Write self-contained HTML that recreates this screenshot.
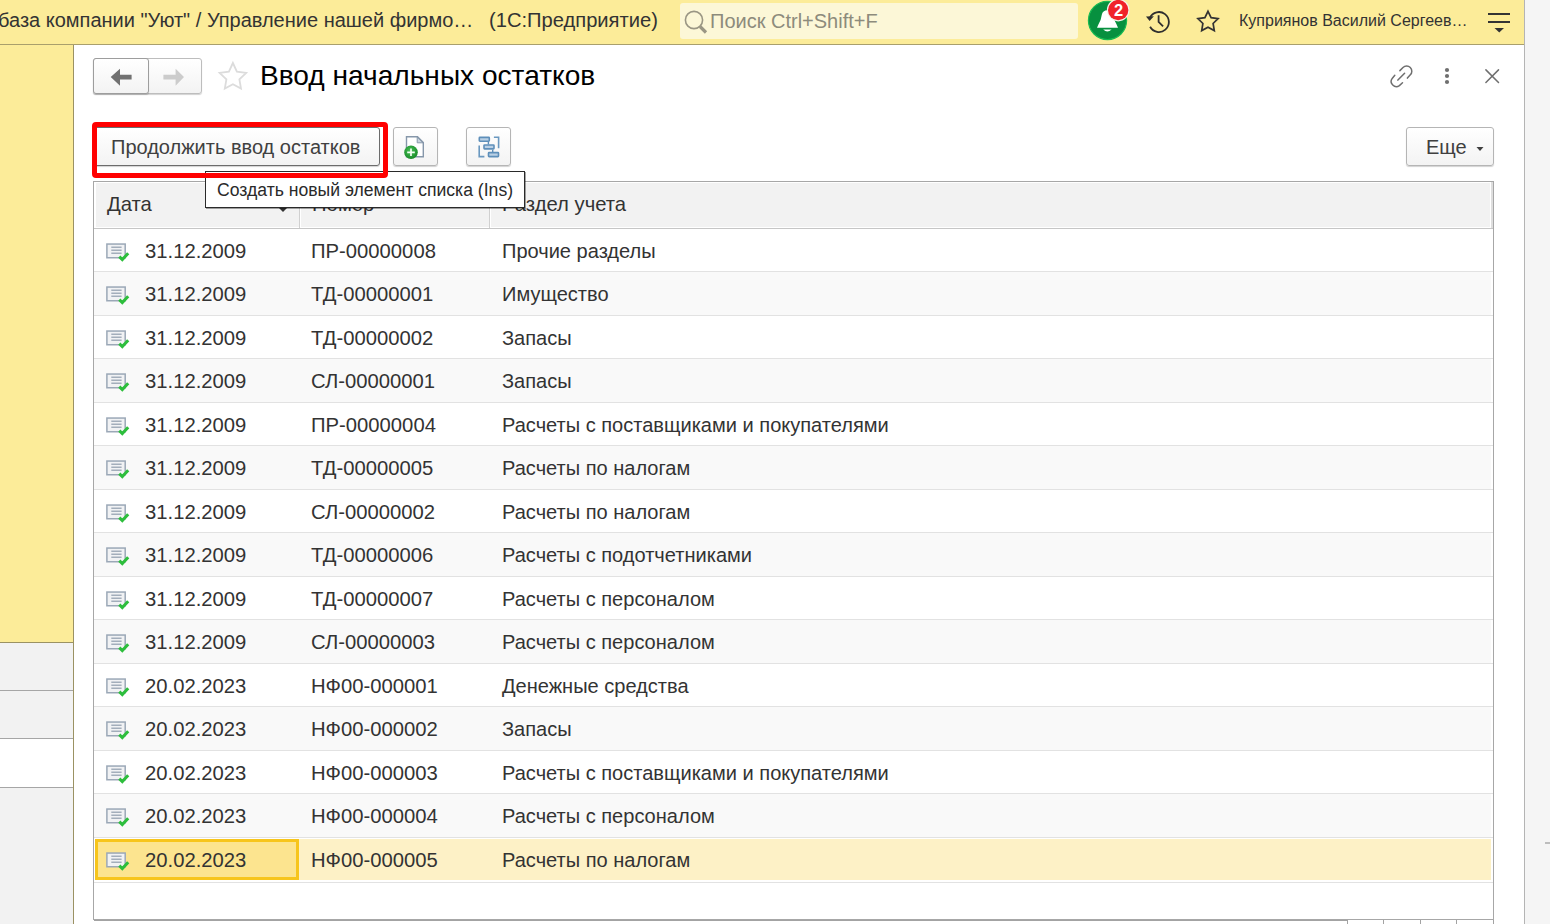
<!DOCTYPE html>
<html><head><meta charset="utf-8">
<style>
*{margin:0;padding:0;box-sizing:border-box}
html,body{width:1550px;height:924px;overflow:hidden;background:#fff;font-family:"Liberation Sans",sans-serif;color:#333}
.a{position:absolute}
.t{position:absolute;white-space:nowrap}
#topbar{left:0;top:0;width:1524px;height:44px;background:#fcec99}
#topline{left:0;top:44px;width:1524px;height:1px;background:#a99f6c}
#rightstrip{left:1525px;top:0;width:25px;height:924px;background:#f5f5f5}
#rightline{left:1524px;top:0;width:1px;height:924px;background:#b4b4b4}
#leftpanel{left:0;top:45px;width:73px;height:597px;background:#fcec99}
#leftline{left:73px;top:45px;width:1px;height:879px;background:#9b9263}
.btn{position:absolute;border:1px solid #b5b5b5;border-radius:3px;background:linear-gradient(#fff,#f3f3f3);box-shadow:0 1px 1px rgba(0,0,0,.18)}
.hdr{position:absolute;top:183px;height:44px;background:#f2f2f2}
.row{position:absolute;left:94px;width:1397px;height:43.5px}
.sep{position:absolute;left:94px;width:1399px;height:1px;background:#e2e2e2}
.cell{position:absolute;font-size:20.25px;line-height:20px;white-space:nowrap;color:#333}
</style></head><body>
<!-- top bar -->
<div class="a" id="topbar"></div>
<div class="a" id="topline"></div>
<div class="a" id="rightline"></div>
<div class="a" id="rightstrip"></div>
<div class="t" style="left:-2px;top:10px;font-size:20px;line-height:20px;color:#333">база компании "Уют" / Управление нашей фирмо…</div>
<div class="t" style="left:489px;top:10px;font-size:20.15px;line-height:20px;color:#333">(1С:Предприятие)</div>
<div class="a" style="left:680px;top:3px;width:398px;height:36px;background:#fcf7d7;border-radius:3px"></div>
<svg class="a" style="left:680px;top:0" width="40" height="44"><circle cx="14" cy="20" r="8.6" fill="none" stroke="#9a9684" stroke-width="1.6"/><line x1="20" y1="26.5" x2="26" y2="32.5" stroke="#9a9684" stroke-width="3.2"/></svg>
<div class="t" style="left:710px;top:11px;font-size:20px;line-height:20px;color:#8d8b7c">Поиск Ctrl+Shift+F</div>
<!-- bell -->
<svg class="a" style="left:1080px;top:0" width="60" height="44">
<circle cx="27.5" cy="20.45" r="19.1" fill="#07903f" stroke="#17bb52" stroke-width="1.2"/>
<path d="M17 27.7 L38 27.7 L36.6 24.5 Q33.8 20 33.2 14.8 Q32.4 10.3 27.5 10.3 Q22.6 10.3 21.8 14.8 Q21.2 20 18.4 24.5 Z" fill="#fff"/>
<path d="M23.2 29.5 L31.6 29.5 Q27.4 33.6 23.2 29.5 Z" fill="#fff"/>
<circle cx="38.2" cy="10.1" r="11.3" fill="#f4f4ea"/>
<circle cx="38.2" cy="10.1" r="10.2" fill="#f0222a"/>
<text x="38.6" y="16" font-family="Liberation Sans" font-weight="bold" font-size="16.5" fill="#fff" text-anchor="middle">2</text>
</svg>
<!-- history -->
<svg class="a" style="left:1140px;top:0.7px" width="40" height="44">
<path d="M9.9 16.6 A10 10 0 1 1 10.1 25.8" fill="none" stroke="#2e2e2e" stroke-width="1.8"/>
<path d="M6 15.4 L13.9 15.2 L9.6 19.9 Z" fill="#2e2e2e"/>
<path d="M18.6 14.3 L18.6 20.9 L23.1 25.3" fill="none" stroke="#2e2e2e" stroke-width="1.8"/>
</svg>
<!-- star -->
<svg class="a" style="left:1190px;top:0" width="40" height="44">
<path d="M18 11.3 L21.1 17.6 L28.1 18.6 L23.1 23.5 L24.3 30.6 L18 27.2 L11.7 30.6 L12.9 23.5 L7.9 18.6 L14.9 17.6 Z" fill="none" stroke="#333" stroke-width="1.7" stroke-linejoin="miter"/>
</svg>
<div class="t" style="left:1239px;top:13px;font-size:16px;line-height:16px;color:#333">Куприянов Василий Сергеев…</div>
<!-- hamburger -->
<div class="a" style="left:1488px;top:13px;width:22px;height:2px;background:#333"></div>
<div class="a" style="left:1488px;top:21px;width:22px;height:2px;background:#333"></div>
<svg class="a" style="left:1490px;top:26px" width="20" height="10"><path d="M4.5 2 L14 2 L9.25 6.5 Z" fill="#333"/></svg>

<!-- left panel -->
<div class="a" id="leftpanel"></div>
<div class="a" style="left:0;top:642px;width:73px;height:1px;background:#9b9263"></div>
<div class="a" style="left:0;top:643px;width:73px;height:47px;background:#f2f2f2"></div>
<div class="a" style="left:0;top:690px;width:73px;height:1px;background:#a6a6a6"></div>
<div class="a" style="left:0;top:691px;width:73px;height:47px;background:#f2f2f2"></div>
<div class="a" style="left:0;top:738px;width:73px;height:1px;background:#a6a6a6"></div>
<div class="a" style="left:0;top:739px;width:73px;height:48px;background:#fff"></div>
<div class="a" style="left:0;top:787px;width:73px;height:1px;background:#a6a6a6"></div>
<div class="a" style="left:0;top:788px;width:73px;height:136px;background:#f2f2f2"></div>
<div class="a" id="leftline"></div>

<!-- nav buttons -->
<div class="btn" style="left:93px;top:58px;width:109px;height:36px;border-color:#bdbdbd"></div>
<div class="btn" style="left:93px;top:58px;width:56px;height:36px;border-color:#9d9d9d"></div>
<svg class="a" style="left:93px;top:58.6px" width="110" height="36">
<path d="M17.7 18 L27 9.8 L27 15.8 L38.6 15.8 L38.6 20.6 L27 20.6 L27 26.8 Z" fill="#717171"/>
<path d="M91 18 L82.6 9.8 L82.6 15.8 L70.4 15.8 L70.4 20.6 L82.6 20.6 L82.6 26.8 Z" fill="#cccccc"/>
</svg>
<svg class="a" style="left:214px;top:59.2px" width="40" height="36">
<path d="M18.9 4 L22.9 12.6 L32.2 13.9 L25.4 20.4 L27 29.6 L18.9 25.2 L10.8 29.6 L12.4 20.4 L5.6 13.9 L14.9 12.6 Z" fill="none" stroke="#dcdcdc" stroke-width="1.8"/>
</svg>
<div class="t" style="left:260px;top:62.1px;font-size:28.1px;line-height:28.1px;color:#000">Ввод начальных остатков</div>
<!-- right icons -->
<svg class="a" style="left:1380px;top:55px" width="140" height="40">
<g fill="none" stroke="#6f6f6f" stroke-width="1.5" stroke-linecap="round">
<path d="M19.9 15.6 L23 12.5 A5.16 5.16 0 0 1 30.3 19.8 L27.4 23.1"/>
<path d="M14.8 20.3 L12.2 23.4 A5.16 5.16 0 0 0 19.4 30.6 L22.5 27.8"/>
<path d="M17.9 25.1 L24.6 18.2"/>
</g>
<circle cx="67" cy="15" r="2.1" fill="#6f6f6f"/><circle cx="67" cy="21" r="2.1" fill="#6f6f6f"/><circle cx="67" cy="27" r="2.1" fill="#6f6f6f"/>
<path d="M105.9 14.9 L118.5 27.5 M118.5 14.9 L105.9 27.5" stroke="#6f6f6f" stroke-width="1.5" stroke-linecap="round"/>
</svg>

<!-- toolbar -->
<div class="btn" style="left:93px;top:127px;width:287px;height:39px;border-color:#6c6c6c"></div>
<div class="t" style="left:111px;top:137px;font-size:20px;line-height:20px;color:#404040">Продолжить ввод остатков</div>
<div class="btn" style="left:393px;top:127px;width:45px;height:39px"></div>
<svg class="a" style="left:393px;top:127px" width="45" height="39">
<path d="M13.5 9.8 L24.5 9.8 L30.3 15.6 L30.3 29.8 L13.5 29.8 Z" fill="#fff" stroke="#8697aa" stroke-width="1.4"/>
<path d="M24.2 10 L24.2 15.8 L30 15.8 Z" fill="#c9d3de" stroke="#8697aa" stroke-width="1"/>
<defs><radialGradient id="gp" cx="0.45" cy="0.4" r="0.6"><stop offset="0" stop-color="#4cc25a"/><stop offset="1" stop-color="#178a27"/></radialGradient></defs>
<circle cx="18" cy="25.3" r="6.8" fill="url(#gp)"/>
<path d="M18 21.5 L18 29.1 M14.2 25.3 L21.8 25.3" stroke="#f4fff4" stroke-width="1.7"/>
</svg>
<div class="btn" style="left:466px;top:127px;width:45px;height:39px"></div>
<svg class="a" style="left:466px;top:127px" width="45" height="39">
<g fill="#bad0e5" stroke="#5e8fba" stroke-width="1.6">
<rect x="13.3" y="10.4" width="10" height="3.8" rx="0.6"/>
<rect x="18" y="18" width="10" height="3.9" rx="0.6"/>
<rect x="22.5" y="25.6" width="10" height="4" rx="0.6"/>
</g>
<path d="M13.2 18.6 V29.6 H18.4 M27.9 10.2 H32.6 V21.2" fill="none" stroke="#6a98c0" stroke-width="1.6"/>
<path d="M22.4 14.9 V17.6 M26.7 22.7 V25" stroke="#5e8fba" stroke-width="1.4"/>
</svg>
<div class="btn" style="left:1406px;top:127px;width:88px;height:39px"></div>
<div class="t" style="left:1426px;top:137px;font-size:20px;line-height:20px;color:#404040">Еще</div>
<svg class="a" style="left:1470px;top:140px" width="20" height="15"><path d="M6.5 7 L13.5 7 L10 11 Z" fill="#404040"/></svg>

<!-- table -->
<div class="a" style="left:93px;top:181px;width:1401px;height:739px;border:1px solid #a7a7a7;background:#fff"></div>
<div class="hdr" style="left:96px;width:203px"></div>
<div class="a" style="left:299px;top:183px;width:1px;height:45px;background:#d0d0d0"></div>
<div class="hdr" style="left:301px;width:188px"></div>
<div class="a" style="left:489px;top:183px;width:1px;height:45px;background:#d0d0d0"></div>
<div class="hdr" style="left:491px;width:999px"></div>
<div class="a" style="left:94px;top:228px;width:1399px;height:1px;background:#c6c6c6"></div>
<div class="a" style="left:1491px;top:182px;width:2px;height:46px;background:#dedede"></div>
<div class="cell" style="left:107px;top:194px;color:#333">Дата</div>
<svg class="a" style="left:276px;top:204px" width="14" height="10"><path d="M2.5 3.5 L11.5 3.5 L7 8 Z" fill="#333"/></svg>
<div class="cell" style="left:312px;top:194px;color:#333">Номер</div>
<div class="cell" style="left:502px;top:194px;color:#333">Раздел учета</div>
<svg class="a" style="left:104px;top:240.5px" width="28" height="22"><rect x="2.9" y="3.05" width="18.3" height="13.7" fill="#f1f2f4" stroke="#9ba8b7" stroke-width="1.5"/><path d="M7.3 6.3 H17.6 M7.3 9.3 H17.6 M7.3 12.3 H17.6" stroke="#a3aebb" stroke-width="1.4"/><path d="M15.3 15.6 L18.3 18.6 L24.2 12.3" fill="none" stroke="#2dbe3c" stroke-width="3"/></svg>
<div class="cell" style="left:145px;top:241.00px">31.12.2009</div>
<div class="cell" style="left:311px;top:241.00px">ПР-00000008</div>
<div class="cell" style="left:502px;top:241.00px;font-size:20.05px">Прочие разделы</div>
<div class="a" style="left:94px;top:272px;width:1397px;height:43px;background:#f9f9f9"></div>
<div class="sep" style="top:271px"></div>
<svg class="a" style="left:104px;top:284.0px" width="28" height="22"><rect x="2.9" y="3.05" width="18.3" height="13.7" fill="#f1f2f4" stroke="#9ba8b7" stroke-width="1.5"/><path d="M7.3 6.3 H17.6 M7.3 9.3 H17.6 M7.3 12.3 H17.6" stroke="#a3aebb" stroke-width="1.4"/><path d="M15.3 15.6 L18.3 18.6 L24.2 12.3" fill="none" stroke="#2dbe3c" stroke-width="3"/></svg>
<div class="cell" style="left:145px;top:284.00px">31.12.2009</div>
<div class="cell" style="left:311px;top:284.00px">ТД-00000001</div>
<div class="cell" style="left:502px;top:284.00px;font-size:20.05px">Имущество</div>
<div class="sep" style="top:315px"></div>
<svg class="a" style="left:104px;top:327.5px" width="28" height="22"><rect x="2.9" y="3.05" width="18.3" height="13.7" fill="#f1f2f4" stroke="#9ba8b7" stroke-width="1.5"/><path d="M7.3 6.3 H17.6 M7.3 9.3 H17.6 M7.3 12.3 H17.6" stroke="#a3aebb" stroke-width="1.4"/><path d="M15.3 15.6 L18.3 18.6 L24.2 12.3" fill="none" stroke="#2dbe3c" stroke-width="3"/></svg>
<div class="cell" style="left:145px;top:328.00px">31.12.2009</div>
<div class="cell" style="left:311px;top:328.00px">ТД-00000002</div>
<div class="cell" style="left:502px;top:328.00px;font-size:20.05px">Запасы</div>
<div class="a" style="left:94px;top:359px;width:1397px;height:43px;background:#f9f9f9"></div>
<div class="sep" style="top:358px"></div>
<svg class="a" style="left:104px;top:371.0px" width="28" height="22"><rect x="2.9" y="3.05" width="18.3" height="13.7" fill="#f1f2f4" stroke="#9ba8b7" stroke-width="1.5"/><path d="M7.3 6.3 H17.6 M7.3 9.3 H17.6 M7.3 12.3 H17.6" stroke="#a3aebb" stroke-width="1.4"/><path d="M15.3 15.6 L18.3 18.6 L24.2 12.3" fill="none" stroke="#2dbe3c" stroke-width="3"/></svg>
<div class="cell" style="left:145px;top:371.00px">31.12.2009</div>
<div class="cell" style="left:311px;top:371.00px">СЛ-00000001</div>
<div class="cell" style="left:502px;top:371.00px;font-size:20.05px">Запасы</div>
<div class="sep" style="top:402px"></div>
<svg class="a" style="left:104px;top:414.5px" width="28" height="22"><rect x="2.9" y="3.05" width="18.3" height="13.7" fill="#f1f2f4" stroke="#9ba8b7" stroke-width="1.5"/><path d="M7.3 6.3 H17.6 M7.3 9.3 H17.6 M7.3 12.3 H17.6" stroke="#a3aebb" stroke-width="1.4"/><path d="M15.3 15.6 L18.3 18.6 L24.2 12.3" fill="none" stroke="#2dbe3c" stroke-width="3"/></svg>
<div class="cell" style="left:145px;top:415.00px">31.12.2009</div>
<div class="cell" style="left:311px;top:415.00px">ПР-00000004</div>
<div class="cell" style="left:502px;top:415.00px;font-size:20.05px">Расчеты с поставщиками и покупателями</div>
<div class="a" style="left:94px;top:446px;width:1397px;height:43px;background:#f9f9f9"></div>
<div class="sep" style="top:445px"></div>
<svg class="a" style="left:104px;top:458.0px" width="28" height="22"><rect x="2.9" y="3.05" width="18.3" height="13.7" fill="#f1f2f4" stroke="#9ba8b7" stroke-width="1.5"/><path d="M7.3 6.3 H17.6 M7.3 9.3 H17.6 M7.3 12.3 H17.6" stroke="#a3aebb" stroke-width="1.4"/><path d="M15.3 15.6 L18.3 18.6 L24.2 12.3" fill="none" stroke="#2dbe3c" stroke-width="3"/></svg>
<div class="cell" style="left:145px;top:458.00px">31.12.2009</div>
<div class="cell" style="left:311px;top:458.00px">ТД-00000005</div>
<div class="cell" style="left:502px;top:458.00px;font-size:20.05px">Расчеты по налогам</div>
<div class="sep" style="top:489px"></div>
<svg class="a" style="left:104px;top:501.5px" width="28" height="22"><rect x="2.9" y="3.05" width="18.3" height="13.7" fill="#f1f2f4" stroke="#9ba8b7" stroke-width="1.5"/><path d="M7.3 6.3 H17.6 M7.3 9.3 H17.6 M7.3 12.3 H17.6" stroke="#a3aebb" stroke-width="1.4"/><path d="M15.3 15.6 L18.3 18.6 L24.2 12.3" fill="none" stroke="#2dbe3c" stroke-width="3"/></svg>
<div class="cell" style="left:145px;top:502.00px">31.12.2009</div>
<div class="cell" style="left:311px;top:502.00px">СЛ-00000002</div>
<div class="cell" style="left:502px;top:502.00px;font-size:20.05px">Расчеты по налогам</div>
<div class="a" style="left:94px;top:533px;width:1397px;height:43px;background:#f9f9f9"></div>
<div class="sep" style="top:532px"></div>
<svg class="a" style="left:104px;top:545.0px" width="28" height="22"><rect x="2.9" y="3.05" width="18.3" height="13.7" fill="#f1f2f4" stroke="#9ba8b7" stroke-width="1.5"/><path d="M7.3 6.3 H17.6 M7.3 9.3 H17.6 M7.3 12.3 H17.6" stroke="#a3aebb" stroke-width="1.4"/><path d="M15.3 15.6 L18.3 18.6 L24.2 12.3" fill="none" stroke="#2dbe3c" stroke-width="3"/></svg>
<div class="cell" style="left:145px;top:545.00px">31.12.2009</div>
<div class="cell" style="left:311px;top:545.00px">ТД-00000006</div>
<div class="cell" style="left:502px;top:545.00px;font-size:20.05px">Расчеты с подотчетниками</div>
<div class="sep" style="top:576px"></div>
<svg class="a" style="left:104px;top:588.5px" width="28" height="22"><rect x="2.9" y="3.05" width="18.3" height="13.7" fill="#f1f2f4" stroke="#9ba8b7" stroke-width="1.5"/><path d="M7.3 6.3 H17.6 M7.3 9.3 H17.6 M7.3 12.3 H17.6" stroke="#a3aebb" stroke-width="1.4"/><path d="M15.3 15.6 L18.3 18.6 L24.2 12.3" fill="none" stroke="#2dbe3c" stroke-width="3"/></svg>
<div class="cell" style="left:145px;top:589.00px">31.12.2009</div>
<div class="cell" style="left:311px;top:589.00px">ТД-00000007</div>
<div class="cell" style="left:502px;top:589.00px;font-size:20.05px">Расчеты с персоналом</div>
<div class="a" style="left:94px;top:620px;width:1397px;height:43px;background:#f9f9f9"></div>
<div class="sep" style="top:619px"></div>
<svg class="a" style="left:104px;top:632.0px" width="28" height="22"><rect x="2.9" y="3.05" width="18.3" height="13.7" fill="#f1f2f4" stroke="#9ba8b7" stroke-width="1.5"/><path d="M7.3 6.3 H17.6 M7.3 9.3 H17.6 M7.3 12.3 H17.6" stroke="#a3aebb" stroke-width="1.4"/><path d="M15.3 15.6 L18.3 18.6 L24.2 12.3" fill="none" stroke="#2dbe3c" stroke-width="3"/></svg>
<div class="cell" style="left:145px;top:632.00px">31.12.2009</div>
<div class="cell" style="left:311px;top:632.00px">СЛ-00000003</div>
<div class="cell" style="left:502px;top:632.00px;font-size:20.05px">Расчеты с персоналом</div>
<div class="sep" style="top:663px"></div>
<svg class="a" style="left:104px;top:675.5px" width="28" height="22"><rect x="2.9" y="3.05" width="18.3" height="13.7" fill="#f1f2f4" stroke="#9ba8b7" stroke-width="1.5"/><path d="M7.3 6.3 H17.6 M7.3 9.3 H17.6 M7.3 12.3 H17.6" stroke="#a3aebb" stroke-width="1.4"/><path d="M15.3 15.6 L18.3 18.6 L24.2 12.3" fill="none" stroke="#2dbe3c" stroke-width="3"/></svg>
<div class="cell" style="left:145px;top:676.00px">20.02.2023</div>
<div class="cell" style="left:311px;top:676.00px">НФ00-000001</div>
<div class="cell" style="left:502px;top:676.00px;font-size:20.05px">Денежные средства</div>
<div class="a" style="left:94px;top:707px;width:1397px;height:43px;background:#f9f9f9"></div>
<div class="sep" style="top:706px"></div>
<svg class="a" style="left:104px;top:719.0px" width="28" height="22"><rect x="2.9" y="3.05" width="18.3" height="13.7" fill="#f1f2f4" stroke="#9ba8b7" stroke-width="1.5"/><path d="M7.3 6.3 H17.6 M7.3 9.3 H17.6 M7.3 12.3 H17.6" stroke="#a3aebb" stroke-width="1.4"/><path d="M15.3 15.6 L18.3 18.6 L24.2 12.3" fill="none" stroke="#2dbe3c" stroke-width="3"/></svg>
<div class="cell" style="left:145px;top:719.00px">20.02.2023</div>
<div class="cell" style="left:311px;top:719.00px">НФ00-000002</div>
<div class="cell" style="left:502px;top:719.00px;font-size:20.05px">Запасы</div>
<div class="sep" style="top:750px"></div>
<svg class="a" style="left:104px;top:762.5px" width="28" height="22"><rect x="2.9" y="3.05" width="18.3" height="13.7" fill="#f1f2f4" stroke="#9ba8b7" stroke-width="1.5"/><path d="M7.3 6.3 H17.6 M7.3 9.3 H17.6 M7.3 12.3 H17.6" stroke="#a3aebb" stroke-width="1.4"/><path d="M15.3 15.6 L18.3 18.6 L24.2 12.3" fill="none" stroke="#2dbe3c" stroke-width="3"/></svg>
<div class="cell" style="left:145px;top:763.00px">20.02.2023</div>
<div class="cell" style="left:311px;top:763.00px">НФ00-000003</div>
<div class="cell" style="left:502px;top:763.00px;font-size:20.05px">Расчеты с поставщиками и покупателями</div>
<div class="a" style="left:94px;top:794px;width:1397px;height:43px;background:#f9f9f9"></div>
<div class="sep" style="top:793px"></div>
<svg class="a" style="left:104px;top:806.0px" width="28" height="22"><rect x="2.9" y="3.05" width="18.3" height="13.7" fill="#f1f2f4" stroke="#9ba8b7" stroke-width="1.5"/><path d="M7.3 6.3 H17.6 M7.3 9.3 H17.6 M7.3 12.3 H17.6" stroke="#a3aebb" stroke-width="1.4"/><path d="M15.3 15.6 L18.3 18.6 L24.2 12.3" fill="none" stroke="#2dbe3c" stroke-width="3"/></svg>
<div class="cell" style="left:145px;top:806.00px">20.02.2023</div>
<div class="cell" style="left:311px;top:806.00px">НФ00-000004</div>
<div class="cell" style="left:502px;top:806.00px;font-size:20.05px">Расчеты с персоналом</div>
<div class="a" style="left:95px;top:839px;width:1396px;height:41px;background:#fdf1c6"></div>
<div class="sep" style="top:837px"></div>
<div class="a" style="left:95px;top:839px;width:204px;height:41px;border:3px solid #f7c51c;background:#fce48f"></div>
<svg class="a" style="left:104px;top:849.5px" width="28" height="22"><rect x="2.9" y="3.05" width="18.3" height="13.7" fill="#f1f2f4" stroke="#9ba8b7" stroke-width="1.5"/><path d="M7.3 6.3 H17.6 M7.3 9.3 H17.6 M7.3 12.3 H17.6" stroke="#a3aebb" stroke-width="1.4"/><path d="M15.3 15.6 L18.3 18.6 L24.2 12.3" fill="none" stroke="#2dbe3c" stroke-width="3"/></svg>
<div class="cell" style="left:145px;top:850.00px">20.02.2023</div>
<div class="cell" style="left:311px;top:850.00px">НФ00-000005</div>
<div class="cell" style="left:502px;top:850.00px;font-size:20.05px">Расчеты по налогам</div>
<div class="sep" style="top:882px"></div>
<div class="a" style="left:205px;top:171px;width:320px;height:37px;background:#fff;border:1px solid #2a2a2a;box-shadow:1px 1px 0 rgba(0,0,0,.35)"></div>
<div class="t" style="left:217px;top:182.2px;font-size:17.6px;line-height:17.6px;color:#2a2a2a">Создать новый элемент списка (Ins)</div>
<div class="a" style="left:92px;top:122px;width:296px;height:56px;border:5px solid #ff0000;border-radius:4px"></div>
<div class="a" style="left:94px;top:920px;width:1253px;height:1px;background:#a3a3a3"></div>
<div class="a" style="left:1347px;top:920px;width:1px;height:4px;background:#a3a3a3"></div>
<div class="a" style="left:1383px;top:920px;width:1px;height:4px;background:#a3a3a3"></div>
<div class="a" style="left:1420px;top:920px;width:1px;height:4px;background:#a3a3a3"></div>
<div class="a" style="left:1456px;top:920px;width:1px;height:4px;background:#a3a3a3"></div>
<div class="a" style="left:1493px;top:920px;width:1px;height:4px;background:#a3a3a3"></div>
<div class="a" style="left:1545px;top:842px;width:5px;height:2px;background:#bdbdbd"></div>
</body></html>
